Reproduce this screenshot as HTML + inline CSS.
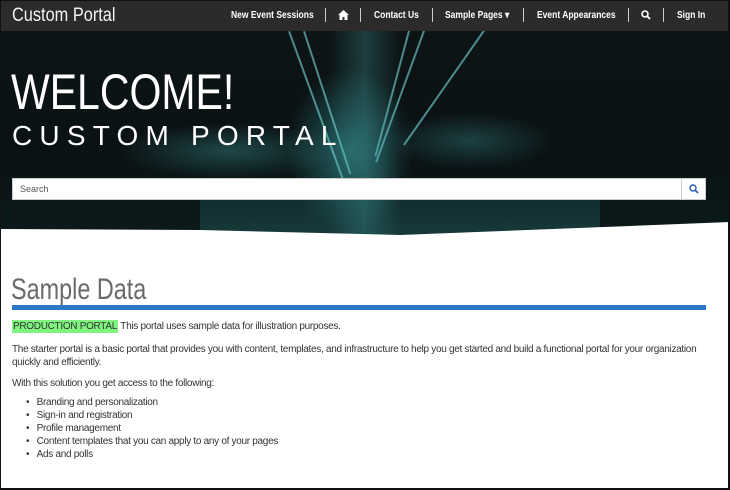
<!DOCTYPE html>
<html><head><meta charset="utf-8"><style>
*{margin:0;padding:0;box-sizing:border-box}
body{width:730px;height:490px;overflow:hidden;background:#fff;font-family:"Liberation Sans",sans-serif;position:relative}
.frame{position:absolute;inset:0;border:1px solid #111;border-right:2px solid #111;border-bottom:2px solid #111;z-index:10;pointer-events:none}
.nav{position:absolute;left:0;top:0;width:730px;height:31px;background:#2d2b2a;color:#fff}
.brand{position:absolute;left:12px;top:5px;font-size:19px;color:#f2f2f2;transform:scaleX(.86);transform-origin:0 0;white-space:nowrap}
.nav .it{position:absolute;top:10px;font-size:10px;font-weight:bold;color:#fff;transform:scaleX(.85);transform-origin:0 0;white-space:nowrap}
.sep{position:absolute;top:8px;width:1px;height:14px;background:#ccc}
.hero{position:absolute;left:0;top:31px;width:730px;height:205px;overflow:hidden;
background:
radial-gradient(ellipse 90px 120px at 350px 120px,rgba(60,170,170,.55),transparent 70%),
radial-gradient(ellipse 160px 40px at 230px 120px,rgba(70,170,170,.35),transparent 70%),
radial-gradient(ellipse 120px 40px at 470px 110px,rgba(70,170,170,.3),transparent 70%),
linear-gradient(180deg,#0d1416 0%,#0a1214 60%,#0b1a1c 100%)}
.ray{position:absolute;height:2px;background:rgba(120,220,220,.6);transform-origin:0 0}
.w{position:absolute;left:11px;top:32px;font-size:50px;color:#fff;transform:scaleX(.82);transform-origin:0 0;white-space:nowrap}
.cp{position:absolute;left:12px;top:89px;font-size:28px;color:#fff;letter-spacing:7.2px;white-space:nowrap}
.search{position:absolute;left:12px;top:147px;width:694px;height:22px;background:#fff;border:1px solid #ccc}
.search span{position:absolute;left:7px;top:5px;font-size:9px;color:#555}
.search .b{position:absolute;right:0;top:0;width:24px;height:20px;border-left:1px solid #ccc}
h1{position:absolute;left:11px;top:273px;font-size:30px;font-weight:normal;color:#6a6a6a;transform:scaleX(.78);transform-origin:0 0;white-space:nowrap}
.bar{position:absolute;left:12px;top:305px;width:694px;height:5px;background:#2a78c6}
p,li{position:absolute;font-size:10px;color:#333;line-height:13px;white-space:nowrap;letter-spacing:-0.3px}
.hl{background:#7ff57f;padding:1px 1px}
</style></head><body>
<div class="frame"></div>
<div class="nav">
<div class="brand">Custom Portal</div>
<div class="it" style="left:231px">New Event Sessions</div>
<div class="sep" style="left:325px"></div>
<svg style="position:absolute;left:338px;top:10px" width="11" height="10" viewBox="0 0 11 10"><path d="M5.5 0L0 5h1.5v5h3V7h2v3h3V5H11z" fill="#fff"/></svg>
<div class="sep" style="left:360px"></div>
<div class="it" style="left:374px">Contact Us</div>
<div class="sep" style="left:432px"></div>
<div class="it" style="left:445px">Sample Pages ▾</div>
<div class="sep" style="left:523px"></div>
<div class="it" style="left:537px">Event Appearances</div>
<div class="sep" style="left:628px"></div>
<svg style="position:absolute;left:641px;top:10px" width="10" height="10" viewBox="0 0 10 10"><circle cx="4" cy="4" r="3" stroke="#fff" stroke-width="1.6" fill="none"/><path d="M6 6l3 3" stroke="#fff" stroke-width="1.8"/></svg>
<div class="sep" style="left:663px"></div>
<div class="it" style="left:677px">Sign In</div>
</div>
<div class="hero">
<div class="ray" style="left:290px;top:0;width:170px;transform:rotate(70deg)"></div>
<div class="ray" style="left:305px;top:0;width:150px;transform:rotate(72deg)"></div>
<div class="ray" style="left:410px;top:0;width:130px;transform:rotate(105deg)"></div>
<div class="ray" style="left:425px;top:0;width:140px;transform:rotate(110deg)"></div>
<div class="ray" style="left:485px;top:0;width:140px;transform:rotate(125deg)"></div>
<div style="position:absolute;left:330px;top:0;width:70px;height:205px;background:linear-gradient(90deg,transparent,rgba(60,140,140,.35),transparent)"></div>
<div style="position:absolute;left:200px;top:150px;width:400px;height:55px;background:linear-gradient(180deg,rgba(40,110,110,.2),rgba(50,130,130,.3))"></div>
<div class="w">WELCOME!</div>
<div class="cp">CUSTOM PORTAL</div>
<div class="search"><span>Search</span><div class="b"><svg style="position:absolute;left:7px;top:5px" width="10" height="10" viewBox="0 0 10 10"><circle cx="4" cy="4" r="3" stroke="#2a5db0" stroke-width="1.4" fill="none"/><path d="M6 6l3 3" stroke="#2a5db0" stroke-width="1.6"/></svg></div></div>
<svg style="position:absolute;left:0;top:0" width="730" height="205"><polygon points="0,198 200,199 400,204 730,191 730,205 0,205" fill="#fff"/></svg>
</div>
<h1>Sample Data</h1>
<div class="bar"></div>
<p style="left:12px;top:320px"><span class="hl">PRODUCTION PORTAL</span> This portal uses sample data for illustration purposes.</p>
<p style="left:12px;top:343px">The starter portal is a basic portal that provides you with content, templates, and infrastructure to help you get started and build a functional portal for your organization<br>quickly and efficiently.</p>
<p style="left:12px;top:377px">With this solution you get access to the following:</p>
<li style="left:26px;top:396px;list-style:none">•&nbsp;&nbsp;&nbsp;Branding and personalization</li>
<li style="left:26px;top:409px;list-style:none">•&nbsp;&nbsp;&nbsp;Sign-in and registration</li>
<li style="left:26px;top:422px;list-style:none">•&nbsp;&nbsp;&nbsp;Profile management</li>
<li style="left:26px;top:435px;list-style:none">•&nbsp;&nbsp;&nbsp;Content templates that you can apply to any of your pages</li>
<li style="left:26px;top:448px;list-style:none">•&nbsp;&nbsp;&nbsp;Ads and polls</li>
</body></html>
